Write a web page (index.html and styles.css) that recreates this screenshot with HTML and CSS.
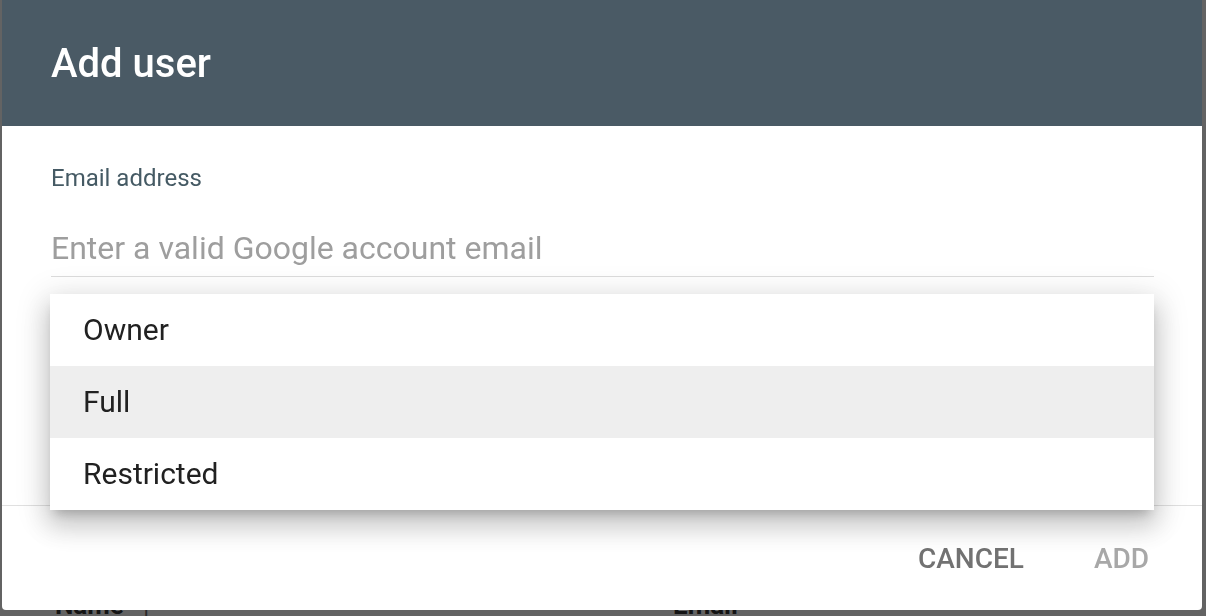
FILE: index.html
```html
<!DOCTYPE html>
<html>
	<head>
		<title>Add user</title>
		<link rel="stylesheet" href="styles.css">
	</head>
<body>
	<!-- The page under the dialog, only its table header peeks out. -->
	<div class="page">
		<div class="table-head">
			<span class="col-name">Name</span>
			<span class="col-sep">|</span>
			<span class="col-email">Email</span>
		</div>
	</div>

	<div class="dialog">
		<div class="dialog-head">
			<h2>Add user</h2>
		</div>

		<div class="dialog-body">
			<label class="field-label" for="email">Email address</label>
			<input class="field-input" id="email" type="text" placeholder="Enter a valid Google account email">
		</div>

		<div class="dialog-actions">
			<button class="btn">CANCEL</button>
			<button class="btn btn-disabled">ADD</button>
		</div>

		<!-- Open permission dropdown, sits over the dialog body. -->
		<ul class="menu">
			<li>Owner</li>
			<li class="active">Full</li>
			<li>Restricted</li>
		</ul>
	</div>
</body>
</html>
```

FILE: styles.css
```css
body {
	margin: 0px;
	padding: 0px;
	font-family: Roboto, 'Liberation Sans', Arial, sans-serif;
	background-color: #636363;
	overflow: hidden;
	height: 616px;
}
.page {
	padding-top: 590px;
}
.table-head {
	display: flex;
	align-items: baseline;
	font-size: 26px;
	font-weight: 700;
	color: #141414;
	line-height: 30px;
}
.col-name {
	padding-left: 55px;
	width: 88px;
}
.col-sep {
	font-weight: 400;
	color: #2a2a2a;
	width: 530px;
}
.col-email {
	width: 200px;
}
.dialog {
	position: fixed;
	top: 0; left: 2px;
	width: 1200px;
	height: 610px;
	background-color: #fff;
	border-radius: 0 0 4px 4px;
	display: flex;
	flex-direction: column;
	overflow: hidden;
}
.dialog-head {
	height: 126px;
	background-color: #4a5a65;
	display: flex;
	align-items: center;
	padding-left: 49px;
	flex-shrink: 0;
}
.dialog-head h2 {
	margin: 0;
	font-size: 40px;
	font-weight: 500;
	color: #fff;
}
.dialog-body {
	flex: 1;
	padding: 38px 48px 0 49px;
	display: flex;
	flex-direction: column;
}
.field-label {
	font-size: 24px;
	color: #455a64;
}
.field-input {
	margin-top: 37px;
	border: none;
	border-bottom: 1px solid #dcdcdc;
	padding: 0 0 9px 0;
	font-family: inherit;
	font-size: 32px;
	color: #212121;
	outline: none;
	background: transparent;
}
.field-input::placeholder {
	color: #9e9e9e;
}
.dialog-actions {
	height: 104px;
	border-top: 1px solid #e0e0e0;
	display: flex;
	justify-content: flex-end;
	align-items: center;
	gap: 70px;
	padding-right: 53px;
	flex-shrink: 0;
}
.btn {
	border: none;
	background: none;
	padding: 0;
	font-family: inherit;
	font-size: 28px;
	font-weight: 500;
	color: #727272;
}
.btn-disabled {
	color: #a8a8a8;
}
.menu {
	position: absolute;
	top: 294px; left: 48px;
	width: 1104px;
	margin: 0;
	padding: 0;
	list-style: none;
	background-color: #fff;
	box-shadow: 0 8px 10px -5px rgba(0,0,0,0.2), 0 16px 24px 2px rgba(0,0,0,0.14), 0 6px 30px 5px rgba(0,0,0,0.12);
}
.menu li {
	height: 70px;
	padding-bottom: 2px;
	display: flex;
	align-items: center;
	padding-left: 33px;
	font-size: 30px;
	color: #212121;
}
.menu li.active {
	background-color: #eeeeee;
}
```
